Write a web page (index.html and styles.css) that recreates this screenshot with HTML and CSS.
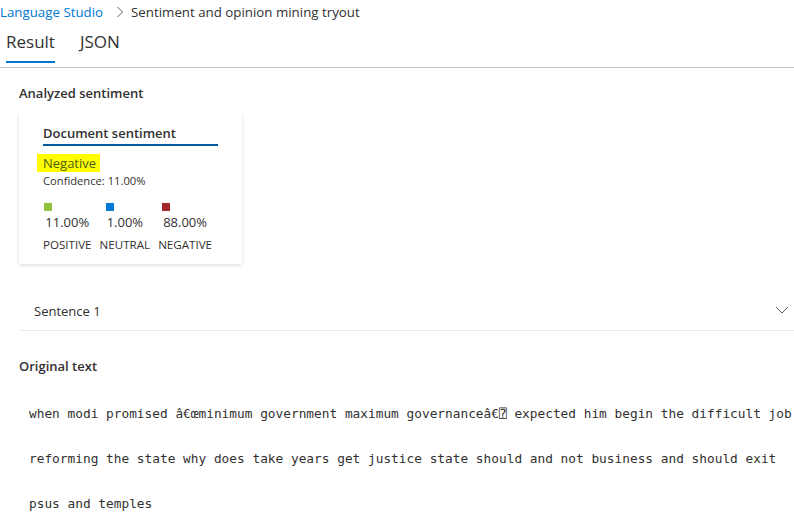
FILE: index.html
```html
<!DOCTYPE html>
<html lang="en">
<head>
<meta charset="utf-8">
<title>Sentiment and opinion mining tryout</title>
<link rel="stylesheet" href="styles.css">
</head>
<body>
<nav class="breadcrumb">
  <a class="crumb-link" href="#">Language Studio</a>
  <svg class="crumb-sep" width="8" height="12" viewBox="0 0 8 12"><path d="M1.5 1 L6.5 6 L1.5 11" fill="none" stroke="#605e5c" stroke-width="1"/></svg>
  <span class="crumb-current">Sentiment and opinion mining tryout</span>
</nav>
<div class="tabs">
  <div class="tab active">Result</div>
  <div class="tab">JSON</div>
</div>
<main class="content">
  <h2 class="section-title">Analyzed sentiment</h2>
  <div class="card">
    <div class="card-title">Document sentiment</div>
    <div class="sentiment"><mark class="hl">Negative</mark></div>
    <div class="confidence">Confidence: 11.00%</div>
    <div class="scores">
      <div class="score">
        <div class="score-top"><span class="swatch pos"></span><span class="value">11.00%</span></div>
        <div class="label">POSITIVE</div>
      </div>
      <div class="score">
        <div class="score-top"><span class="swatch neu"></span><span class="value">1.00%</span></div>
        <div class="label">NEUTRAL</div>
      </div>
      <div class="score">
        <div class="score-top"><span class="swatch neg"></span><span class="value">88.00%</span></div>
        <div class="label">NEGATIVE</div>
      </div>
    </div>
  </div>
  <div class="sentence-row">
    <span>Sentence 1</span>
    <svg class="chev" width="14" height="8" viewBox="0 0 14 8"><path d="M1 1 L7 7 L13 1" fill="none" stroke="#605e5c" stroke-width="1"/></svg>
  </div>
  <h2 class="section-title orig">Original text</h2>
  <div class="orig-text">when modi promised â€œminimum government maximum governanceâ€⍰ expected him begin the difficult job<br>reforming the state why does take years get justice state should and not business and should exit<br>psus and temples</div>
</main>
</body>
</html>
```
FILE: styles.css
```css
html, body {
  margin: 0;
  padding: 0;
  background: #ffffff;
}
body {
  font-family: "Open Sans", "Noto Sans", sans-serif;
  color: #323130;
  width: 794px;
  overflow: hidden;
}
.breadcrumb {
  display: flex;
  align-items: center;
  height: 24px;
  font-size: 13.3px;
  padding-left: 0;
}
.crumb-link {
  color: #0078d4;
  text-decoration: none;
}
.crumb-sep {
  margin: 0 7px 0 13px;
}
.crumb-current {
  color: #323130;
}
.tabs {
  display: flex;
  gap: 25px;
  padding-left: 6px;
  border-bottom: 1px solid #c8c6c4;
  height: 44px;
  box-sizing: border-box;
}
.tab {
  font-size: 17px;
  line-height: 24px;
  padding-top: 6px;
  color: #323130;
  height: 39px;
  box-sizing: border-box;
}
.tab.active {
  border-bottom: 2px solid #0078d4;
}
.content {
  padding-left: 19px;
}
.section-title {
  font-size: 13px;
  font-weight: 600;
  margin: 0;
  line-height: 18px;
  padding-top: 16px;
}
.card {
  margin-top: 10px;
  width: 223px;
  box-sizing: border-box;
  padding: 12px 24px 12px 24px;
  background: #fff;
  box-shadow: 0 1.6px 3.6px rgba(0,0,0,0.13), 0 0.3px 0.9px rgba(0,0,0,0.11);
}
.card-title {
  font-size: 13px;
  font-weight: 600;
  line-height: 18px;
  padding-bottom: 2px;
  border-bottom: 2px solid #005a9e;
}
.sentiment {
  margin-top: 10px;
  line-height: 15px;
  font-size: 13px;
}
.hl {
  background: #ffff00;
  color: #4a5a12;
  padding: 0 4px 0 6px;
  margin-left: -6px;
}
.confidence {
  font-size: 11.2px;
  line-height: 14px;
  margin-top: 3px;
}
.scores {
  display: flex;
  gap: 8px;
  margin-top: 15px;
}
.score {
  display: flex;
  flex-direction: column;
  align-items: center;
}
.score-top {
  display: flex;
  flex-direction: column;
  align-items: flex-start;
}
.swatch {
  width: 8px;
  height: 8px;
  margin-left: -1px;
}
.swatch.pos { background: #92c13e; }
.swatch.neu { background: #0078d4; }
.swatch.neg { background: #a4262c; }
.value {
  font-size: 13px;
  line-height: 18px;
  margin-top: 2px;
}
.label {
  font-size: 11.6px;
  line-height: 14px;
  margin-top: 7px;
}
.sentence-row {
  display: flex;
  align-items: center;
  justify-content: space-between;
  height: 38px;
  margin-top: 28px;
  padding-left: 15px;
  padding-right: 5px;
  font-size: 13px;
  border-bottom: 1px solid #edebe9;
}
.chev {
  margin-top: -2px;
}
.orig {
  padding-top: 26px;
}
.orig-text {
  font-family: "DejaVu Sans Mono", "Liberation Mono", monospace;
  font-size: 12.8px;
  line-height: 45px;
  margin-top: 16px;
  padding-left: 10px;
  white-space: nowrap;
  color: #323130;
}
```
